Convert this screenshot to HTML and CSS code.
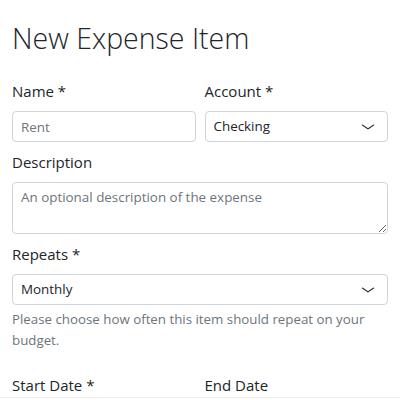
FILE: index.html
```html
<!DOCTYPE html>
<html lang="en">
<head>
<meta charset="utf-8">
<title>New Expense Item</title>
<link rel="stylesheet" href="styles.css">
</head>
<body>
<div class="page">
  <form class="form">
    <h1 class="title">New Expense Item</h1>
    <div class="row">
      <div class="field">
        <label class="label" for="name">Name *</label>
        <input class="control" id="name" type="text" placeholder="Rent">
      </div>
      <div class="field">
        <label class="label" for="account">Account *</label>
        <div class="select-wrap">
          <select class="control select" id="account"><option>Checking</option></select>
          <svg class="chevron" viewBox="0 0 16 16" width="16" height="12" preserveAspectRatio="none"><path d="M2.5 5.5l5.5 5 5.5-5" fill="none" stroke="#343a40" stroke-width="1.6" stroke-linecap="round" stroke-linejoin="round"/></svg>
        </div>
      </div>
    </div>
    <div class="field block">
      <label class="label" for="desc">Description</label>
      <textarea class="control textarea" id="desc" rows="2" placeholder="An optional description of the expense"></textarea>
    </div>
    <div class="field block">
      <label class="label" for="repeats">Repeats *</label>
      <div class="select-wrap">
        <select class="control select" id="repeats"><option>Monthly</option></select>
        <svg class="chevron" viewBox="0 0 16 16" width="16" height="12" preserveAspectRatio="none"><path d="M2.5 5.5l5.5 5 5.5-5" fill="none" stroke="#343a40" stroke-width="1.6" stroke-linecap="round" stroke-linejoin="round"/></svg>
      </div>
      <div class="help">Please choose how often this item should repeat on your budget.</div>
    </div>
    <div class="row dates">
      <div class="field">
        <label class="label" for="start">Start Date *</label>
        <input class="control" id="start" type="text">
      </div>
      <div class="field">
        <label class="label" for="end">End Date</label>
        <input class="control" id="end" type="text">
      </div>
    </div>
  </form>
</div>
</body>
</html>
```
FILE: styles.css
```css
* { box-sizing: border-box; }
html, body { margin: 0; padding: 0; background: #fff; }
body {
  font-family: "Open Sans", "Noto Sans", sans-serif;
  font-size: 15px;
  color: #212529;
  line-height: 1.5;
}
.page {
  height: 398px;
  overflow: hidden;
  border-bottom: 1px solid #ececec;
}
.form {
  padding: 19px 12px 0 12px;
}
.title {
  margin: 0 0 22px 0;
  font-size: 28.5px;
  font-weight: 300;
  line-height: 38px;
}
.row {
  display: flex;
  gap: 9px;
}
.row .field { flex: 1 1 0; min-width: 0; }
.field { margin-bottom: 8px; }
.label {
  display: block;
  margin-bottom: 8px;
  line-height: 24px;
}
.control {
  display: block;
  width: 100%;
  height: 31px;
  padding: 4px 8px;
  font-family: inherit;
  font-size: 13.4px;
  line-height: 21px;
  color: #212529;
  background: #fff;
  border: 1px solid #ced4da;
  border-radius: 4px;
  outline: none;
}
.control::placeholder { color: #6c757d; opacity: 1; }
.textarea {
  height: 52px;
  resize: vertical;
}
.select-wrap { position: relative; }
.select {
  appearance: none;
  -webkit-appearance: none;
  padding-right: 36px;
}
.chevron {
  position: absolute;
  right: 12px;
  top: 50%;
  margin-top: -6px;
  pointer-events: none;
}
.help {
  margin-top: 4px;
  font-size: 13.3px;
  line-height: 21px;
  color: #6c757d;
}
.dates { margin-top: 22px; }
```
